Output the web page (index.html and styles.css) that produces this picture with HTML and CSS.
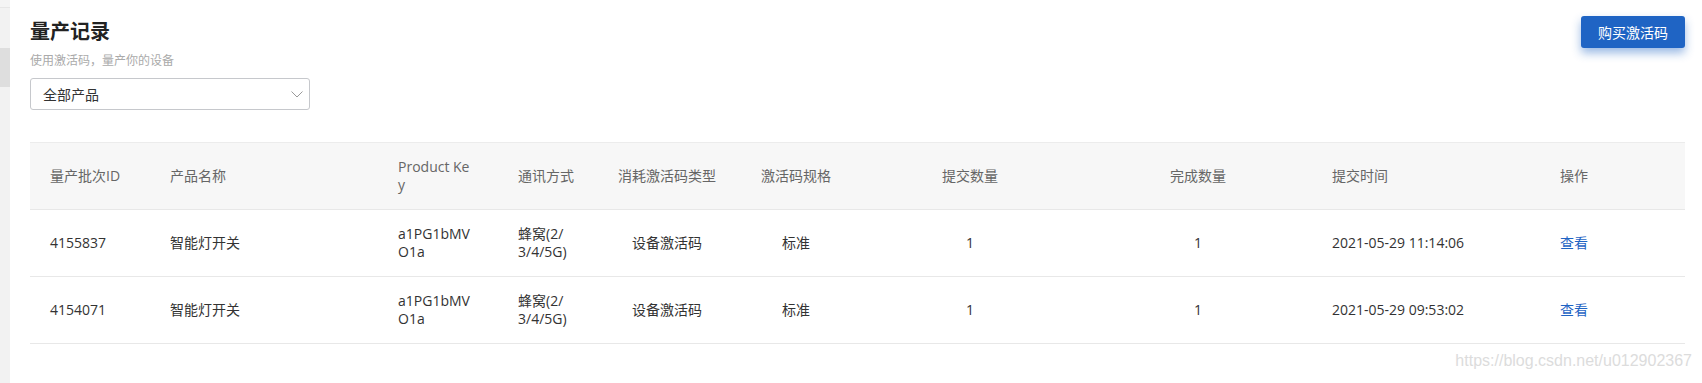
FILE: index.html
```html
<!DOCTYPE html>
<html>
<head>
    <meta charset="utf-8">
    <meta name="viewport" content="width=device-width, initial-scale=1">
    <title>量产记录</title>
    <link rel="stylesheet" href="styles.css">
</head>
<body>
    <div class="layout">
        <aside class="side">
            <div class="side-top"></div>
            <div class="side-block"></div>
        </aside>
        <main class="main">
            <div class="head">
                <div class="head-left">
                    <h1 class="title">量产记录</h1>
                    <p class="sub">使用激活码，量产你的设备</p>
                    <div class="select">
                        <span>全部产品</span>
                        <svg width="12" height="7" viewBox="0 0 12 7"><polyline points="0.5,0.5 6,6 11.5,0.5" fill="none" stroke="#9a9a9a" stroke-width="1"/></svg>
                    </div>
                </div>
                <button type="button" class="buy">购买激活码</button>
            </div>

            <table class="list">
                <colgroup>
                    <col style="width:120px">
                    <col style="width:228px">
                    <col style="width:120px">
                    <col style="width:100px">
                    <col style="width:138px">
                    <col style="width:120px">
                    <col style="width:228px">
                    <col style="width:228px">
                    <col style="width:228px">
                    <col>
                </colgroup>
                <thead>
                    <tr>
                        <th>量产批次ID</th>
                        <th>产品名称</th>
                        <th class="key">Product Key</th>
                        <th>通讯方式</th>
                        <th class="mid">消耗激活码类型</th>
                        <th class="mid">激活码规格</th>
                        <th class="mid">提交数量</th>
                        <th class="mid">完成数量</th>
                        <th>提交时间</th>
                        <th>操作</th>
                    </tr>
                </thead>
                <tbody>
                    <tr>
                        <td>4155837</td>
                        <td>智能灯开关</td>
                        <td class="key">a1PG1bMVO1a</td>
                        <td>蜂窝(2/<wbr>3/4/5G)</td>
                        <td class="mid">设备激活码</td>
                        <td class="mid">标准</td>
                        <td class="mid">1</td>
                        <td class="mid">1</td>
                        <td>2021-05-29 11:14:06</td>
                        <td><a class="link" href="#">查看</a></td>
                    </tr>
                    <tr>
                        <td>4154071</td>
                        <td>智能灯开关</td>
                        <td class="key">a1PG1bMVO1a</td>
                        <td>蜂窝(2/<wbr>3/4/5G)</td>
                        <td class="mid">设备激活码</td>
                        <td class="mid">标准</td>
                        <td class="mid">1</td>
                        <td class="mid">1</td>
                        <td>2021-05-29 09:53:02</td>
                        <td><a class="link" href="#">查看</a></td>
                    </tr>
                </tbody>
            </table>
        </main>
    </div>
    <div class="watermark">https://blog.csdn.net/u012902367</div>
</body>
</html>
```

FILE: styles.css
```css
*
{
    margin: 0;
    padding: 0;
    box-sizing: border-box;
}
body
{
    position: relative;
    height: 383px;
    background: #fff;
    font-family: "Open Sans", "Noto Sans CJK SC", sans-serif;
    font-size: 14px;
    color: #333;
    overflow: hidden;
}
.layout
{
    display: flex;
    height: 100%;
}
.side
{
    width: 10px;
    flex-shrink: 0;
    background: #f2f2f2;
    display: flex;
    flex-direction: column;
}
.side-top
{
    height: 48px;
    border-top: 7px solid #f4f4f4;
    border-bottom: 0;
    box-shadow: inset 0 1px 0 #e6e6e6;
}
.side-block
{
    height: 39px;
    background: #dedede;
}
.main
{
    flex: 1;
    padding: 0 17px 0 20px;
}
.head
{
    display: flex;
    justify-content: space-between;
    align-items: flex-start;
    padding-top: 16px;
}
.title
{
    margin-top: 2px;
    font-size: 20px;
    line-height: 28px;
    font-weight: bold;
    color: #222;
}
.sub
{
    margin-top: 7px;
    font-size: 12px;
    line-height: 16px;
    color: #aaa;
}
.select
{
    margin-top: 9px;
    width: 280px;
    height: 32px;
    border: 1px solid #c6c8cc;
    border-radius: 3px;
    display: flex;
    align-items: center;
    justify-content: space-between;
    padding: 0 6px 0 12px;
    color: #333;
}
.select svg
{
    margin-top: 1px;
}
.buy
{
    width: 104px;
    height: 32px;
    border: none;
    border-radius: 3px;
    background: #1f64c4;
    color: #fff;
    font-family: inherit;
    font-size: 14px;
    box-shadow: 0 5px 10px rgba(31, 100, 196, 0.45);
}
.list
{
    margin-top: 32px;
    width: 100%;
    table-layout: fixed;
    border-collapse: collapse;
}
.list th,
.list td
{
    padding: 15px 20px;
    line-height: 18px;
    text-align: left;
    vertical-align: middle;
    border-bottom: 1px solid #e8e8e8;
}
.list th
{
    font-weight: normal;
    color: #666;
    background: #f7f7f7;
    border-top: 1px solid #ececec;
}
.list .key
{
    padding-right: 25px;
    word-break: break-all;
}
.list .mid
{
    text-align: center;
}
.link
{
    color: #1f64c4;
    text-decoration: none;
}
.watermark
{
    position: absolute;
    right: 10px;
    top: 352px;
    font-family: "Liberation Sans", sans-serif;
    font-size: 16px;
    line-height: 18px;
    color: #dcdcdc;
}
```
